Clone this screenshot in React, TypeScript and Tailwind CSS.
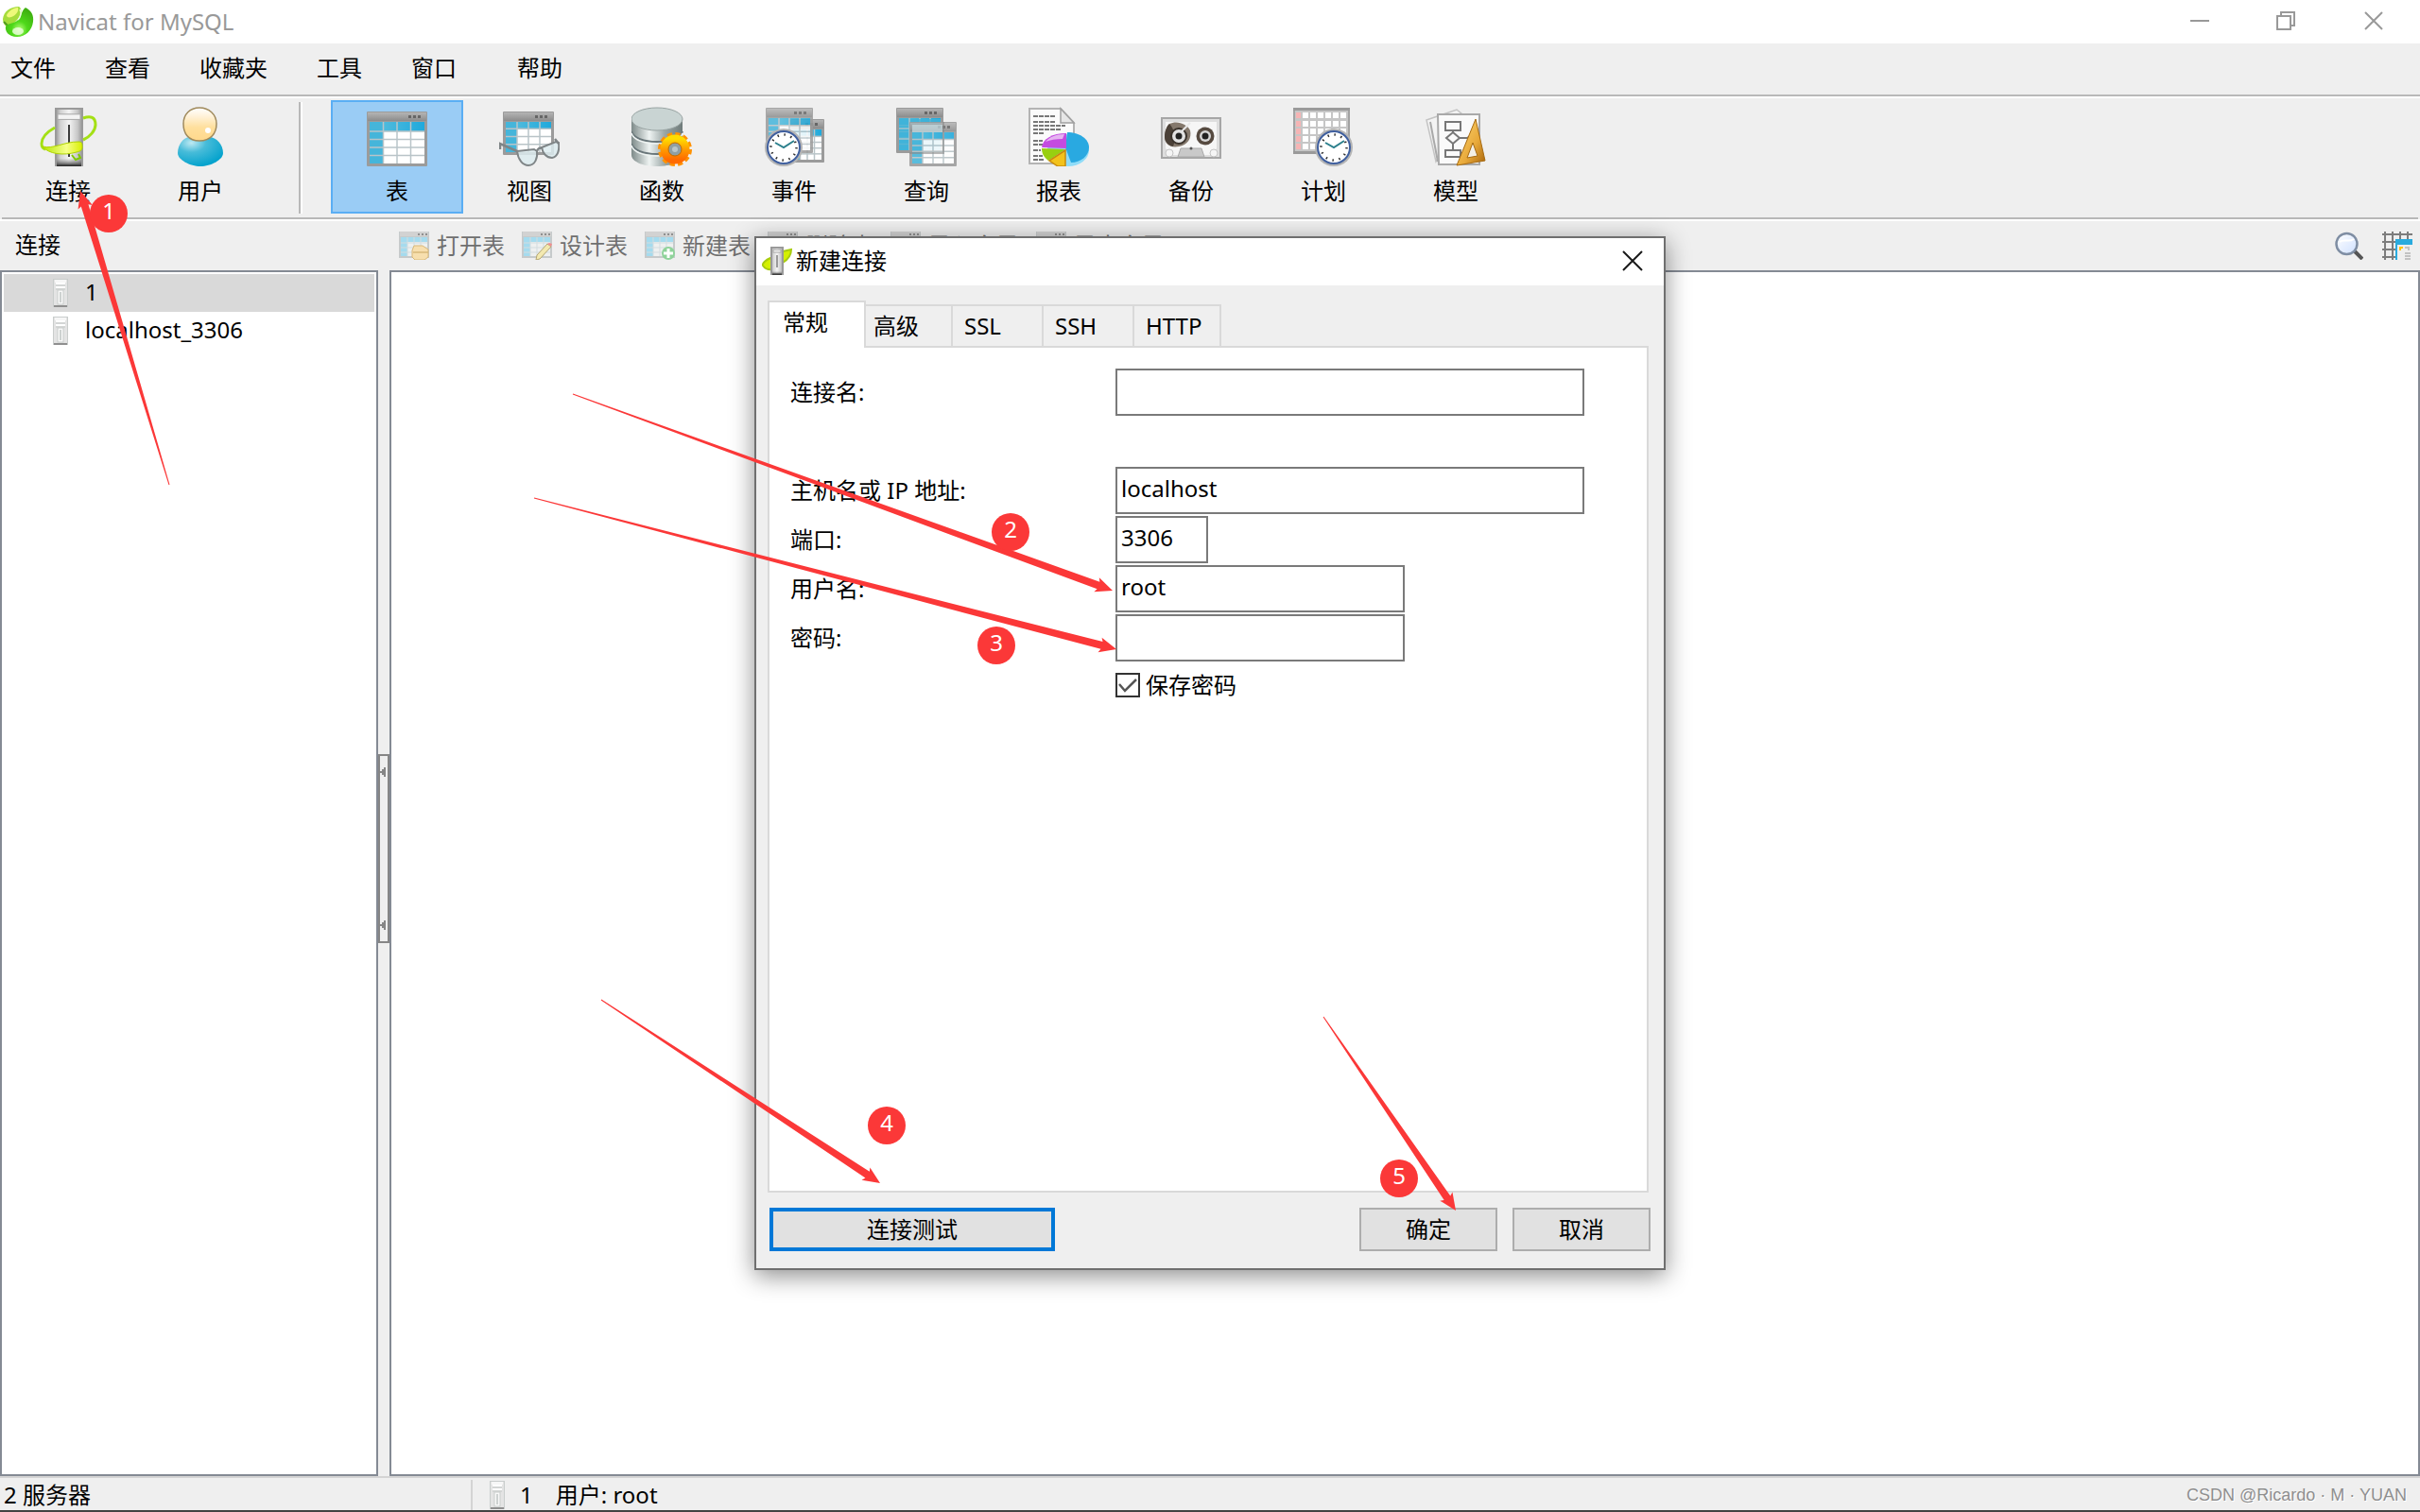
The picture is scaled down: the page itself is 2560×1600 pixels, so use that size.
import React from 'react';

type IconProps = { className?: string };

const Gradients: React.FC = () => (
  <svg className="absolute w-0 h-0" aria-hidden="true">
    <defs>
      <linearGradient id="metal" x1="0" x2="1" y1="0" y2="0">
        <stop offset="0" stopColor="#8a8a8a" />
        <stop offset="0.2" stopColor="#d2d2d2" />
        <stop offset="0.5" stopColor="#f4f4f4" />
        <stop offset="0.8" stopColor="#c8c8c8" />
        <stop offset="1" stopColor="#8c8c8c" />
      </linearGradient>
      <linearGradient id="serverFoot" x1="0" x2="0" y1="0" y2="1">
        <stop offset="0" stopColor="#8a8a8a" stopOpacity="0" />
        <stop offset="1" stopColor="#222222" />
      </linearGradient>
      <linearGradient id="leaf" x1="0" x2="1" y1="0" y2="0">
        <stop offset="0" stopColor="#b4e600" />
        <stop offset="0.6" stopColor="#f6ff8a" />
        <stop offset="1" stopColor="#d8ee00" />
      </linearGradient>
      <linearGradient id="bar" x1="0" x2="0" y1="0" y2="1">
        <stop offset="0" stopColor="#b4b4b4" />
        <stop offset="1" stopColor="#8c8c8c" />
      </linearGradient>
      <linearGradient id="cells" x1="0" x2="1" y1="0" y2="0">
        <stop offset="0" stopColor="#5fc0dc" />
        <stop offset="1" stopColor="#1fa9dc" />
      </linearGradient>
      <linearGradient id="face" x1="0" x2="0" y1="0" y2="1">
        <stop offset="0" stopColor="#ffffff" />
        <stop offset="0.25" stopColor="#fff2da" />
        <stop offset="0.6" stopColor="#ffdf9c" />
        <stop offset="1" stopColor="#ffd88c" />
      </linearGradient>
      <radialGradient id="torso" cx="0.3" cy="0.2" r="0.8">
        <stop offset="0" stopColor="#bfe9f2" />
        <stop offset="0.4" stopColor="#48bcd9" />
        <stop offset="1" stopColor="#06a3cd" />
      </radialGradient>
      <linearGradient id="drum" x1="0" x2="1" y1="0" y2="0">
        <stop offset="0" stopColor="#7d8a89" />
        <stop offset="0.35" stopColor="#eef3f2" />
        <stop offset="0.65" stopColor="#9aa6a5" />
        <stop offset="1" stopColor="#6f7b7a" />
      </linearGradient>
      <linearGradient id="gear" x1="0" x2="0" y1="0" y2="1">
        <stop offset="0" stopColor="#ffdc00" />
        <stop offset="0.5" stopColor="#ff9c00" />
        <stop offset="1" stopColor="#ff6a00" />
      </linearGradient>
      <linearGradient id="wood" x1="0" x2="1" y1="0" y2="1">
        <stop offset="0" stopColor="#ffd873" />
        <stop offset="0.6" stopColor="#e8a93a" />
        <stop offset="1" stopColor="#a8640a" />
      </linearGradient>
      <radialGradient id="apple" cx="0.5" cy="0.75" r="0.7">
        <stop offset="0" stopColor="#b8ff7a" />
        <stop offset="0.4" stopColor="#4fd91a" />
        <stop offset="1" stopColor="#3fb010" />
      </radialGradient>
      <linearGradient id="lens" x1="0" x2="1" y1="0" y2="1">
        <stop offset="0" stopColor="#ffffff" />
        <stop offset="1" stopColor="#cfe0ff" />
      </linearGradient>
    </defs>
  </svg>
);

const Logo: React.FC<IconProps> = ({ className }) => (
  <svg viewBox="0 0 34 32" className={className}>
    <path d="M1 13C2 5 9 0 18 0c3 2 3 6 1 10-3 5-7 8-12 12-4-1-6-5-6-9z" fill="#a6dc3c" />
    <path d="M5 9c2-4 7-8 12-8 1 4-2 8-7 10-3 1-5 0-5-2z" fill="#eef97a" />
    <path d="M2 16l5 5" stroke="#4f9a20" strokeWidth="2" fill="none" />
    <path d="M25 1c6 3 9 8 8 15-1 9-8 16-17 16C7 32 3 26 4 21c3-4 8-3 12-6 5-4 4-10 9-14z" fill="url(#apple)" />
    <path d="M19 3c2 3 1 8-2 11" stroke="#e8ffd8" strokeWidth="1.5" fill="none" />
    <ellipse cx="17" cy="26" rx="6" ry="4" fill="#f0ffe2" opacity="0.8" />
  </svg>
);

const ServerBox: React.FC<{ x: number; y: number; w: number; h: number }> = ({ x, y, w, h }) => (
  <g>
    <rect x={x} y={y} width={w} height={h} fill="url(#metal)" />
    <rect x={x + 1} y={y + 1} width={w - 2} height={h - 2} fill="none" stroke="#9a9a9a" strokeWidth="2" />
    <rect x={x + 3} y={y + h * 0.11} width={w - 6} height={h * 0.09} fill="#f4f4f4" stroke="#a8a8a8" strokeWidth="1" />
    <rect x={x + 2} y={y + h * 0.86} width={w - 4} height={h * 0.14} fill="url(#serverFoot)" />
  </g>
);

const ConnectIcon: React.FC<IconProps> = ({ className }) => (
  <svg viewBox="0 0 64 64" className={className}>
    <ServerBox x={18} y={2} w={30} h={62} />
    <path d="M33 20v34" stroke="#3c3c3c" strokeWidth="2" />
    <path d="M48 13c8-3 13-1 13 7 0 6-6 13-13 16" fill="none" stroke="#a4e015" strokeWidth="3" />
    <path d="M18 23C9 28 4 34 4 40c0 3 1 5 4 6" fill="none" stroke="#a4e015" strokeWidth="3" />
    <path d="M5 43c12 3 22-5 38-5 4 0 4 2 4 6 0 3-2 4-6 5-14 4-30 2-36-6z" fill="url(#leaf)" stroke="#b0d400" />
    <path d="M36 52l4 5 5-2-2-4" fill="none" stroke="#7fc800" strokeWidth="2" />
  </svg>
);

const UserIcon: React.FC<IconProps> = ({ className }) => (
  <svg viewBox="0 0 64 64" className={className}>
    <path d="M8 50c0-9 6-17 13-17h20c8 0 15 8 15 17 0 7-13 14-24 14S8 57 8 50z" fill="url(#torso)" />
    <path d="M14 19C14 9 21 2 31 2s18 7 18 17-6 18-18 18-17-8-17-18z" fill="url(#face)" stroke="#a08a5c" strokeWidth="1.5" />
    <circle cx="40" cy="26" r="3" fill="#ffffff" />
  </svg>
);

// Small application window holding a data grid, shared by most of the icons
const GridWindow: React.FC<{ x: number; y: number; w: number; h: number; rows?: number }> = ({ x, y, w, h, rows = 4 }) => {
  const top = y + 11;
  const bodyH = h - 14;
  const headH = bodyH * 0.23;
  const sideW = (w - 6) * 0.25;
  const lines = Array.from({ length: rows }, (_, i) => top + headH + (i * (bodyH - headH)) / rows);
  return (
    <g>
      <rect x={x} y={y} width={w} height={h} rx="1" fill="#9b9b9b" />
      <rect x={x + 1} y={y + 1} width={w - 2} height="9" fill="url(#bar)" />
      {[17, 12, 7].map((d) => (
        <rect key={d} x={x + w - d - 3} y={y + 4} width="3" height="3" fill="#666666" />
      ))}
      <rect x={x + 3} y={top} width={w - 6} height={bodyH} fill="#ffffff" />
      <rect x={x + 3} y={top} width={w - 6} height={headH} fill="url(#cells)" />
      <rect x={x + 3} y={top} width={sideW} height={bodyH} fill="#45b5da" />
      {lines.map((ly) => (
        <path key={ly} d={`M${x + 3} ${ly}h${w - 6}`} stroke="#b9c4c8" strokeWidth="1.5" />
      ))}
      {[1, 2, 3].map((c) => (
        <path key={c} d={`M${x + 3 + c * sideW} ${top}v${bodyH}`} stroke="#b9c4c8" strokeWidth="1.5" />
      ))}
    </g>
  );
};

const Clock: React.FC<{ cx: number; cy: number }> = ({ cx, cy }) => (
  <g>
    <circle cx={cx} cy={cy} r="20" fill="#b4b4b4" />
    <circle cx={cx} cy={cy} r="17" fill="#ffffff" stroke="#3f5f9f" strokeWidth="2" />
    <circle cx={cx} cy={cy} r="13.5" fill="none" stroke="#333333" strokeWidth="2.5" strokeDasharray="1.5 5.57" />
    <path d={`M${cx - 9} ${cy - 5}l9 5 11-7`} fill="none" stroke="#2b7f8c" strokeWidth="2" />
  </g>
);

const TableIcon: React.FC<IconProps> = ({ className }) => (
  <svg viewBox="0 0 64 64" className={className}>
    <GridWindow x={0} y={6} w={64} h={58} />
  </svg>
);

const ViewIcon: React.FC<IconProps> = ({ className }) => (
  <svg viewBox="0 0 64 64" className={className}>
    <GridWindow x={4} y={6} w={54} h={46} rows={3} />
    <g fill="#dcebee" fillOpacity="0.85" stroke="#7f8587" strokeWidth="2">
      <path d="M19 48l18-2 3 2c1 7-2 15-9 15-6 0-11-6-12-15z" />
      <path d="M45 44l15-6 3 1c1 8-1 15-7 16-6 0-10-5-11-11z" />
    </g>
    <path d="M19 48L1 40v6M40 48c1-3 3-4 5-3M63 40l-4-5" fill="none" stroke="#7f8587" strokeWidth="2.5" />
  </svg>
);

const FunctionIcon: React.FC<IconProps> = ({ className }) => (
  <svg viewBox="0 0 64 64" className={className}>
    <path d="M0 14v38c0 7 12 12 27 12s27-5 27-12V14z" fill="url(#drum)" />
    <path d="M0 27c2 7 13 11 27 11s25-4 27-11M0 40c2 7 13 11 27 11s25-4 27-11" fill="none" stroke="#69767a" strokeWidth="2" />
    <path d="M0 29c2 7 13 11 27 11s25-4 27-11M0 42c2 7 13 11 27 11s25-4 27-11" fill="none" stroke="#eef3f2" strokeWidth="1.5" />
    <ellipse cx="27" cy="14" rx="27" ry="12" fill="#c9d4d3" stroke="#98a3a2" />
    <circle cx="46" cy="46" r="15.5" fill="none" stroke="#ff9200" strokeWidth="5" strokeDasharray="5 3.1" />
    <circle cx="46" cy="46" r="11" fill="none" stroke="url(#gear)" strokeWidth="9" />
    <circle cx="46" cy="46" r="7" fill="#8f9fa3" stroke="#c06a00" />
    <circle cx="46" cy="46" r="3" fill="#bac6c9" />
  </svg>
);

const EventIcon: React.FC<IconProps> = ({ className }) => (
  <svg viewBox="0 0 64 64" className={className}>
    <GridWindow x={28} y={14} w={36} h={46} />
    <g opacity="0.85">
      <GridWindow x={2} y={2} w={50} h={48} />
    </g>
    <Clock cx={21} cy={44} />
  </svg>
);

const QueryIcon: React.FC<IconProps> = ({ className }) => (
  <svg viewBox="0 0 64 64" className={className}>
    <GridWindow x={0} y={2} w={50} h={48} />
    <rect x="3" y="14" width="44" height="33" fill="#3fb3d8" opacity="0.8" />
    <path d="M3 24h44M3 35h44M14 14v33" stroke="#a5c4cd" strokeWidth="1.5" />
    <g opacity="0.88">
      <GridWindow x={14} y={17} w={50} h={47} />
    </g>
    <rect x="17" y="20" width="32" height="8" fill="#c8dde3" opacity="0.7" />
    <path d="M50 17v33H14" fill="none" stroke="#8a8a8a" strokeWidth="2" opacity="0.6" />
  </svg>
);

const ReportIcon: React.FC<IconProps> = ({ className }) => (
  <svg viewBox="0 0 64 64" className={className}>
    <path d="M1 3h33l14 15v43H1z" fill="#fbfbfb" stroke="#b4b4b4" strokeWidth="2" />
    <path d="M34 3v15h14z" fill="#e6e6e6" stroke="#a0a0a0" strokeWidth="1.5" />
    <path d="M5 11h24M5 17h24M5 21h34M5 25h30M5 29h12M5 37h10M5 41h10M5 47h8M5 53h10M5 57h12" stroke="#777777" strokeWidth="2" strokeDasharray="5 1" />
    <ellipse cx="42" cy="47" rx="22" ry="17" fill="#8fdcf8" />
    <path d="M41 28c13 0 23 7 23 16s-9 16-19 16l-6-16z" fill="#29a9e1" />
    <path d="M40 29v16l-26-1c1-9 11-15 26-15z" fill="#c44be0" />
    <path d="M18 38c4-5 11-8 20-8l-2 5c-7 0-13 1-18 3z" fill="#e6b4f2" />
    <path d="M14 45l25 1-18 12c-5-4-7-8-7-13z" fill="#98cf10" />
    <path d="M39 47v17h-8l-9-6z" fill="#f2c21c" stroke="#c98a0c" strokeWidth="1.5" />
  </svg>
);

const BackupIcon: React.FC<IconProps> = ({ className }) => (
  <svg viewBox="0 0 64 64" className={className}>
    <rect x="1" y="13" width="62" height="42" fill="#dedede" stroke="#a6a6a6" strokeWidth="2" />
    <path d="M5 17h54v28l-6 7H11l-6-7z" fill="#f6f6f6" />
    <path d="M9 19c8-4 19 0 22 7 2 8-3 16-12 17-9 2-15-3-15-10 0-6 2-11 5-14z" fill="#85796d" />
    <path d="M9 19c6 6 7 16 4 24-5-1-9-5-9-10 0-6 2-11 5-14z" fill="#4b4138" />
    <circle cx="19" cy="32" r="8" fill="#e2e2e2" stroke="#3a332c" strokeWidth="2" />
    <circle cx="19" cy="32" r="3.5" fill="#222222" />
    <path d="M22 27l9-9" stroke="#e9e9e9" strokeWidth="2" />
    <circle cx="47" cy="32" r="9.5" fill="#564a40" />
    <circle cx="47" cy="32" r="6" fill="#d6d6d6" />
    <circle cx="47" cy="32" r="3.5" fill="#222222" />
    <path d="M18 54l3-9h22l3 9z" fill="#c9c9c9" stroke="#a9a9a9" />
    <circle cx="32" cy="45" r="1.5" fill="#555555" />
    <circle cx="9" cy="50" r="4" fill="#f5f5f5" stroke="#c4c4c4" />
    <circle cx="56" cy="50" r="4" fill="#f5f5f5" stroke="#c4c4c4" />
  </svg>
);

const PlanIcon: React.FC<IconProps> = ({ className }) => (
  <svg viewBox="0 0 64 64" className={className}>
    <rect x="1" y="3" width="58" height="47" fill="#c6c6c6" stroke="#a2a2a2" strokeWidth="2" />
    <path d="M0 3.5h60M0 49.5h60" stroke="#9a9a9a" strokeWidth="3" />
    {[7, 16, 24, 32, 40].map((y) => (
      <g key={y}>
        <rect x="3" y={y} width="5" height="6" fill="#f6b4b4" />
        {[10, 18, 26, 34, 42, 50].map((x) => (
          <rect key={x} x={x} y={y} width="6" height="6" fill="#ffffff" />
        ))}
      </g>
    ))}
    <Clock cx={43} cy={44} />
  </svg>
);

const ModelIcon: React.FC<IconProps> = ({ className }) => (
  <svg viewBox="0 0 64 64" className={className}>
    <path d="M1 15l32-11 6 5-28 50z" fill="#f3f3f3" stroke="#c4c4c4" strokeWidth="1.5" />
    <path d="M5 17l8 42" stroke="#a9a9a9" strokeWidth="2" />
    <path d="M13 9h44v53H14z" fill="#fafafa" stroke="#a9a9a9" strokeWidth="2" />
    <g fill="none" stroke="#777777" strokeWidth="2">
      <path d="M21 17h16v9H21zM21 47h16v7H21zM29 26v3M29 40v7M36 34h8l6-4" />
      <path d="M29 28l7 6-7 6-7-6z" />
    </g>
    <path d="M53 14l10 44-30 5z" fill="url(#wood)" stroke="#a66a12" strokeWidth="1" />
    <path d="M50 39l5 14-11 2z" fill="#f4f0e6" stroke="#a66a12" strokeWidth="1" />
  </svg>
);

const SmallTable: React.FC<IconProps & { children?: React.ReactNode }> = ({ className, children }) => (
  <svg viewBox="0 0 32 30" className={className}>
    <rect x="0" y="0" width="32" height="28" fill="#c6cacb" />
    <rect x="1" y="0" width="30" height="5" fill="#d2d2d2" />
    <path d="M20 3h2M24 3h2M28 3h2" stroke="#8f8f8f" strokeWidth="2" />
    <rect x="2" y="6" width="28" height="20" fill="#eef0f0" />
    <path d="M2 6h28v5H2zM2 11h7v15H2z" fill="#a5dbee" />
    <path d="M2 12h28M2 17h28M2 22h28M9 6v20M16 6v20M23 6v20" stroke="#d3dcdf" strokeWidth="1" />
    {children}
  </svg>
);

const OpenTableIcon = (
  <SmallTable className="w-8 h-[30px]">
    <path d="M16 15h9l6 4v8l-4 3H17l-3-3v-7z" fill="#f7dfae" stroke="#d9b878" />
    <path d="M15 22h16" stroke="#d9b878" strokeWidth="1.5" />
  </SmallTable>
);
const DesignTableIcon = (
  <SmallTable className="w-8 h-[30px]">
    <path d="M27 13l4 3-12 13-4 1 1-5z" fill="#f3e9b0" stroke="#b5a773" />
    <path d="M27 13l4 3 1-3-3-1z" fill="#ef8f8f" />
  </SmallTable>
);
const NewTableIcon = (
  <SmallTable className="w-8 h-[30px]">
    <circle cx="25" cy="23" r="7" fill="#8fd39a" />
    <path d="M25 18v10M20 23h10" stroke="#ffffff" strokeWidth="3" />
  </SmallTable>
);
const PlainTableIcon = <SmallTable className="w-8 h-[30px]" />;

const ServerIcon: React.FC<IconProps> = ({ className }) => (
  <svg viewBox="0 0 16 30" className={className}>
    <rect x="0.5" y="0.5" width="15" height="29" fill="#e4e4e4" stroke="#c9cdcc" />
    <rect x="2" y="1" width="12" height="3" fill="#f6f6f6" />
    <path d="M3 5h10M3 9h10" stroke="#ffffff" strokeWidth="2" />
    <path d="M3 7h10M3 11h10" stroke="#c2c6c5" strokeWidth="1" />
    <rect x="5" y="12" width="6" height="15" fill="#f8f8f8" stroke="#c9cdcc" />
    <path d="M8 14v11" stroke="#cdd1d0" strokeWidth="2" />
    <path d="M1 29h14" stroke="#8f8f8f" strokeWidth="2" />
  </svg>
);

const tools = [
  { label: '表', Icon: TableIcon, active: true },
  { label: '视图', Icon: ViewIcon },
  { label: '函数', Icon: FunctionIcon },
  { label: '事件', Icon: EventIcon },
  { label: '查询', Icon: QueryIcon },
  { label: '报表', Icon: ReportIcon },
  { label: '备份', Icon: BackupIcon },
  { label: '计划', Icon: PlanIcon },
  { label: '模型', Icon: ModelIcon },
];

const actions = [
  { label: '打开表', icon: OpenTableIcon },
  { label: '设计表', icon: DesignTableIcon },
  { label: '新建表', icon: NewTableIcon },
  { label: '删除表', icon: PlainTableIcon },
  { label: '导入向导', icon: PlainTableIcon },
  { label: '导出向导', icon: PlainTableIcon },
];

const ToolButton: React.FC<{ label: string; Icon: React.FC<IconProps>; active?: boolean }> = ({ label, Icon, active }) => (
  <button
    type="button"
    className={`w-[140px] h-[120px] pt-1 flex flex-col items-center border-2 ${
      active ? 'bg-[#9accf5] border-[#5aaef4]' : 'border-transparent'
    }`}
  >
    <Icon className="w-16 h-16" />
    <span className="mt-3 leading-7">{label}</span>
  </button>
);

const TitleBar: React.FC = () => (
  <header className="h-[46px] bg-white flex items-center justify-between">
    <div className="flex items-center">
      <Logo className="ml-[2px] w-[34px] h-8" />
      <h1 className="ml-1 text-[#999999]">Navicat for MySQL</h1>
    </div>
    <div className="flex items-center pr-[38px] pb-[2px] gap-[70px]">
      <button type="button" aria-label="最小化">
        <svg viewBox="0 0 22 22" className="w-[22px] h-[22px]">
          <path d="M1 11h20" stroke="#999999" strokeWidth="2" />
        </svg>
      </button>
      <button type="button" aria-label="还原">
        <svg viewBox="0 0 22 22" className="w-[22px] h-[22px]" fill="none" stroke="#999999" strokeWidth="2">
          <path d="M1 6h14v14H1zM5 6V2h14v14h-4" />
        </svg>
      </button>
      <button type="button" aria-label="关闭">
        <svg viewBox="0 0 22 22" className="w-[22px] h-[22px]">
          <path d="M2 2l18 18M20 2L2 20" stroke="#999999" strokeWidth="2" />
        </svg>
      </button>
    </div>
  </header>
);

const MenuBar: React.FC = () => (
  <nav className="h-14 pl-[11px] pb-[2px] flex items-center gap-[52px] border-b-2 border-[#b8b8b8]">
    {['文件', '查看', '收藏夹', '工具', '窗口'].map((item) => (
      <button key={item} type="button">
        {item}
      </button>
    ))}
    <button type="button" className="ml-3">
      帮助
    </button>
  </nav>
);

const Toolbar: React.FC = () => (
  <div className="border-t-2 border-white">
    <div className="mx-[2px] pt-[2px] pb-1 flex border-b-2 border-[#b8b8b8]">
      <ToolButton label="连接" Icon={ConnectIcon} />
      <ToolButton label="用户" Icon={UserIcon} />
      <div className="ml-[34px] mr-[30px] mt-[2px] w-1 bg-[#b8b8b8] border-r-2 border-white" />
      {tools.map((tool) => (
        <ToolButton key={tool.label} {...tool} />
      ))}
    </div>
    <div className="h-[2px] bg-white" />
  </div>
);

const Sidebar: React.FC = () => (
  <aside className="w-[400px] flex flex-col">
    <h2 className="h-[52px] pl-4 pb-[2px] flex items-center">连接</h2>
    <ul className="flex-1 bg-white border-2 border-[#848a94] p-[2px]">
      {['1', 'localhost_3306'].map((name, i) => (
        <li key={name} className={`h-10 pl-[52px] flex items-center gap-[18px] ${i === 0 ? 'bg-[#d9d9d9]' : ''}`}>
          <ServerIcon className="w-4 h-[30px]" />
          <span className="pb-[2px]">{name}</span>
        </li>
      ))}
    </ul>
  </aside>
);

const Splitter: React.FC = () => (
  <div className="w-3 flex items-center">
    <button
      type="button"
      aria-label="折叠"
      className="w-3 h-[200px] border-2 border-[#868686] bg-[#efefef] flex flex-col justify-between items-start py-3"
    >
      {['top', 'bottom'].map((pos) => (
        <svg key={pos} viewBox="0 0 6 10" className="w-[6px] h-[10px]">
          <path d="M6 0v10H4V8H2V6H0V4h2V2h2V0z" fill="#868686" />
        </svg>
      ))}
    </button>
  </div>
);

const Workspace: React.FC = () => (
  <main className="flex-1 flex flex-col">
    <div className="h-[52px] pl-[10px] pr-2 flex items-center gap-[18px] text-[#6f6f6f]">
      {actions.map(({ label, icon }) => (
        <button key={label} type="button" className="flex items-center gap-2">
          {icon}
          <span>{label}</span>
        </button>
      ))}
      <div className="ml-auto flex gap-5">
        <button type="button" aria-label="搜索">
          <svg viewBox="0 0 30 30" className="w-[30px] h-[30px]">
            <path d="M21 21l8 8" stroke="#555555" strokeWidth="4" />
            <circle cx="12.5" cy="13" r="11" fill="url(#lens)" stroke="#7f8ea3" strokeWidth="2.5" />
            <path d="M5 11c5-4 10 1 15-3" fill="none" stroke="#ffffff" strokeWidth="2" />
          </svg>
        </button>
        <button type="button" aria-label="网格视图">
          <svg viewBox="0 0 32 30" className="w-8 h-[30px]">
            <path d="M0 3h32M0 11h32M0 19h16M0 27h16M3 0v30M11 0v30M19 0v10M27 0v10" stroke="#7d7d7d" strokeWidth="2" />
            <rect x="14" y="8" width="18" height="22" fill="#efefef" />
            <path d="M14 8h18v6H16v16h-2z" fill="#29abde" />
            <path d="M18 16h4v2h-2v2h-2z" fill="#ffc400" />
            <path d="M24 17h4v3M24 23h6M24 26h6M24 29h6" stroke="#c2c2c2" strokeWidth="2" fill="none" />
          </svg>
        </button>
      </div>
    </div>
    <div className="flex-1 bg-white border-2 border-[#848a94]" />
  </main>
);

const StatusBar: React.FC = () => (
  <footer className="h-[38px] flex border-t-2 border-[#d4d4d4] border-b-2 border-b-[#434343]">
    <div className="w-[500px] mt-[2px] pl-1 flex items-center border-r-2 border-[#d4d4d4]">2 服务器</div>
    <div className="flex-1 mt-[2px] pl-[18px] pr-[14px] flex items-center">
      <ServerIcon className="w-4 h-[30px]" />
      <span className="ml-4">1</span>
      <span className="ml-6">用户: root</span>
      <span className="ml-auto font-['Liberation_Sans',sans-serif] text-lg text-[#8f8f8f] [text-shadow:1px_1px_0_#ffffff]">
        CSDN @Ricardo · M · YUAN
      </span>
    </div>
  </footer>
);

const tabs = [
  { label: '高级', size: 'w-[92px] pl-2' },
  { label: 'SSL', size: 'w-24 pl-3' },
  { label: 'SSH', size: 'w-24 pl-3' },
  { label: 'HTTP', size: 'w-[92px] pl-3' },
];

const fields = [
  { id: 'name', label: '连接名:', value: '', size: 'w-[496px]', type: 'text', gap: 'mb-[54px]' },
  { id: 'host', label: '主机名或 IP 地址:', value: 'localhost', size: 'w-[496px]', type: 'text', gap: 'mb-[2px]' },
  { id: 'port', label: '端口:', value: '3306', size: 'w-[98px]', type: 'text', gap: 'mb-[2px]' },
  { id: 'user', label: '用户名:', value: 'root', size: 'w-[306px]', type: 'text', gap: 'mb-[2px]' },
  { id: 'password', label: '密码:', value: '', size: 'w-[306px]', type: 'password', gap: 'mb-3' },
];

const ConnectionDialog: React.FC = () => (
  <section
    role="dialog"
    aria-label="新建连接"
    className="absolute left-[798px] top-[250px] w-[964px] h-[1094px] flex flex-col bg-[#efefef] border-2 border-[#6f6f6f] shadow-[0_6px_24px_rgba(0,0,0,0.45)]"
  >
    <div className="h-[50px] bg-white pl-[6px] pr-[22px] pb-[2px] flex items-center">
      <svg viewBox="0 0 32 30" className="w-8 h-[30px]">
        <path d="M9 12C4 14 0 18 1 20c2 3 6 5 11 4l2-6zM22 5l9-2c0 6-4 11-9 14" fill="#d4f000" stroke="#a8cc10" strokeWidth="2" />
        <ServerBox x={9} y={0} w={14} h={30} />
        <path d="M16 9v13" stroke="#9a9a9a" strokeWidth="2" />
      </svg>
      <h2 className="ml-1">新建连接</h2>
      <button type="button" aria-label="关闭" className="ml-auto">
        <svg viewBox="0 0 22 22" className="w-[22px] h-[22px]">
          <path d="M1 1l20 20M21 1L1 21" stroke="#1a1a1a" strokeWidth="2" />
        </svg>
      </button>
    </div>

    <div className="flex-1 pt-4 pl-3 pr-[14px] pb-[18px] flex flex-col">
      <div className="flex items-end" role="tablist">
        <button
          type="button"
          role="tab"
          aria-selected="true"
          className="relative -mb-[2px] w-[104px] h-[50px] pl-[14px] pb-[6px] text-left bg-white border-2 border-b-0 border-[#d9d9d9]"
        >
          常规
        </button>
        {tabs.map(({ label, size }) => (
          <button
            key={label}
            type="button"
            role="tab"
            aria-selected="false"
            className={`h-11 text-left border-t-2 border-r-2 border-[#d9d9d9] ${size}`}
          >
            {label}
          </button>
        ))}
      </div>
      <form id="connection" className="flex-1 mr-[2px] pt-[22px] pl-[22px] bg-white border-2 border-[#d9d9d9]">
        {fields.map(({ id, label, value, size, type, gap }) => (
          <div key={id} className={`flex items-center ${gap}`}>
            <label htmlFor={id} className="w-[344px]">
              {label}
            </label>
            <input
              id={id}
              type={type}
              defaultValue={value}
              className={`h-[50px] pl-1 pb-[6px] bg-white border-2 border-[#7a7a7a] ${size}`}
            />
          </div>
        ))}
        <label className="ml-[344px] h-[26px] w-fit flex items-center gap-[6px]">
          <span className="grid w-[26px] h-[26px]">
            <input type="checkbox" defaultChecked className="col-start-1 row-start-1 appearance-none w-[26px] h-[26px] border-2 border-[#333333]" />
            <svg viewBox="0 0 26 26" className="col-start-1 row-start-1 w-[26px] h-[26px]">
              <path d="M4 12l6 7L22 7" fill="none" stroke="#555555" strokeWidth="2.5" />
            </svg>
          </span>
          保存密码
        </label>
      </form>
      <div className="mt-4 pl-[2px] flex gap-4">
        <button type="button" className="mr-auto w-[302px] h-[46px] bg-[#e1e1e1] border-4 border-[#0078d7]">
          连接测试
        </button>
        <button type="button" className="w-[146px] h-[46px] bg-[#e1e1e1] border-2 border-[#adadad]">
          确定
        </button>
        <button type="button" className="w-[146px] h-[46px] bg-[#e1e1e1] border-2 border-[#adadad]">
          取消
        </button>
      </div>
    </div>
  </section>
);

const steps = [
  { from: [179, 513], to: [85, 202], badge: [115, 226] },
  { from: [606, 417], to: [1177, 625], badge: [1069, 563] },
  { from: [565, 527], to: [1181, 687], badge: [1054, 683] },
  { from: [636, 1058], to: [931, 1252], badge: [938, 1191] },
  { from: [1400, 1076], to: [1540, 1281], badge: [1480, 1247] },
];

// Tapered shaft growing from the tail, with a short head at the tip
const arrowPoints = ([x1, y1]: number[], [x2, y2]: number[]) => {
  const len = Math.hypot(x2 - x1, y2 - y1);
  const ux = (x2 - x1) / len;
  const uy = (y2 - y1) / len;
  const at = (back: number, side: number) => `${x2 - ux * back - uy * side},${y2 - uy * back + ux * side}`;
  return [at(len, 0.5), at(16, 4), at(18, 8), at(0, 0), at(18, -8), at(16, -4), at(len, -0.5)].join(' ');
};

const Annotations: React.FC = () => (
  <div className="absolute inset-0 overflow-hidden pointer-events-none">
    <svg className="w-full h-full" fill="#fb3838">
      {steps.map(({ from, to }, i) => (
        <polygon key={i} points={arrowPoints(from, to)} />
      ))}
    </svg>
    {steps.map(({ badge: [x, y] }, i) => (
      <span
        key={i}
        className="absolute w-10 h-10 pb-[6px] rounded-full bg-[#fb3838] text-white flex items-center justify-center"
        style={{ left: x - 20, top: y - 20 }}
      >
        {i + 1}
      </span>
    ))}
  </div>
);

const App: React.FC = () => (
  <div className="relative min-h-screen flex flex-col bg-[#efefef] text-black text-2xl leading-7 font-['Noto_Sans','Noto_Sans_CJK_SC',sans-serif]">
    <Gradients />
    <TitleBar />
    <MenuBar />
    <Toolbar />
    <div className="flex-1 flex">
      <Sidebar />
      <Splitter />
      <Workspace />
    </div>
    <StatusBar />
    <ConnectionDialog />
    <Annotations />
  </div>
);

export default App;
